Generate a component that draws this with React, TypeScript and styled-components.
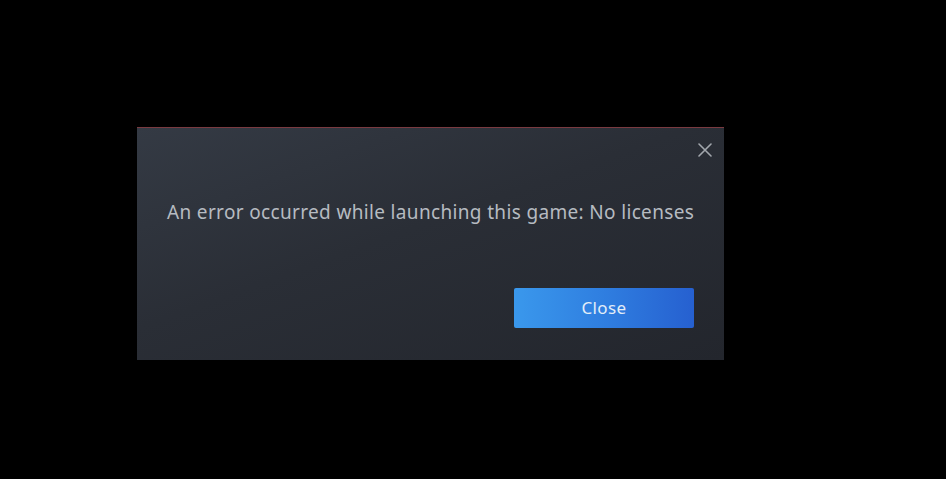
import React from "react";
import styled, { createGlobalStyle } from "styled-components";

const Global = createGlobalStyle`
  html, body { margin: 0; padding: 0; background: #000; width: 946px; height: 479px; overflow: hidden; }
  * { box-sizing: border-box; }
`;

const Page = styled.div`
  width: 946px;
  height: 479px;
  padding: 127px 0 0 137px;
`;

const Dialog = styled.div`
  width: 587px;
  height: 233px;
  position: relative;
  border-top: 1px solid #7a3a40;
  background: linear-gradient(160deg, #343a44 0%, #2a2e36 45%, #23262d 100%);
  padding: 72px 30px 0 30px;
  display: flex;
  flex-direction: column;
  font-family: "Noto Sans", "Open Sans", sans-serif;
`;

const CloseX = styled.button`
  position: absolute;
  top: 13px;
  right: 10px;
  width: 18px;
  height: 18px;
  padding: 0;
  border: none;
  background: transparent;
  display: flex;
  align-items: center;
  justify-content: center;
`;

const Message = styled.div`
  color: #b6bbc1;
  font-size: 19px;
  letter-spacing: 0.34px;
  line-height: 24px;
  white-space: nowrap;
`;

const Footer = styled.div`
  display: flex;
  justify-content: flex-end;
  margin-top: 64px;
`;

const Button = styled.button`
  width: 180px;
  height: 40px;
  border: none;
  border-radius: 2px;
  background: linear-gradient(90deg, #3a98ec 0%, #2f7ee0 50%, #2660d0 100%);
  color: #e3edf8;
  font-family: "Noto Sans", "Open Sans", sans-serif;
  font-size: 17px;
  letter-spacing: 0.4px;
  padding: 0 0 1px 0;
`;

export default function App() {
  return (
    <>
      <Global />
      <Page>
        <Dialog>
          <CloseX aria-label="close">
            <svg width="14" height="14" viewBox="0 0 14 14">
              <path d="M1 1 L13 13 M13 1 L1 13" stroke="#a2a7ad" strokeWidth="1.6" strokeLinecap="round" />
            </svg>
          </CloseX>
          <Message>An error occurred while launching this game: No licenses</Message>
          <Footer>
            <Button>Close</Button>
          </Footer>
        </Dialog>
      </Page>
    </>
  );
}
